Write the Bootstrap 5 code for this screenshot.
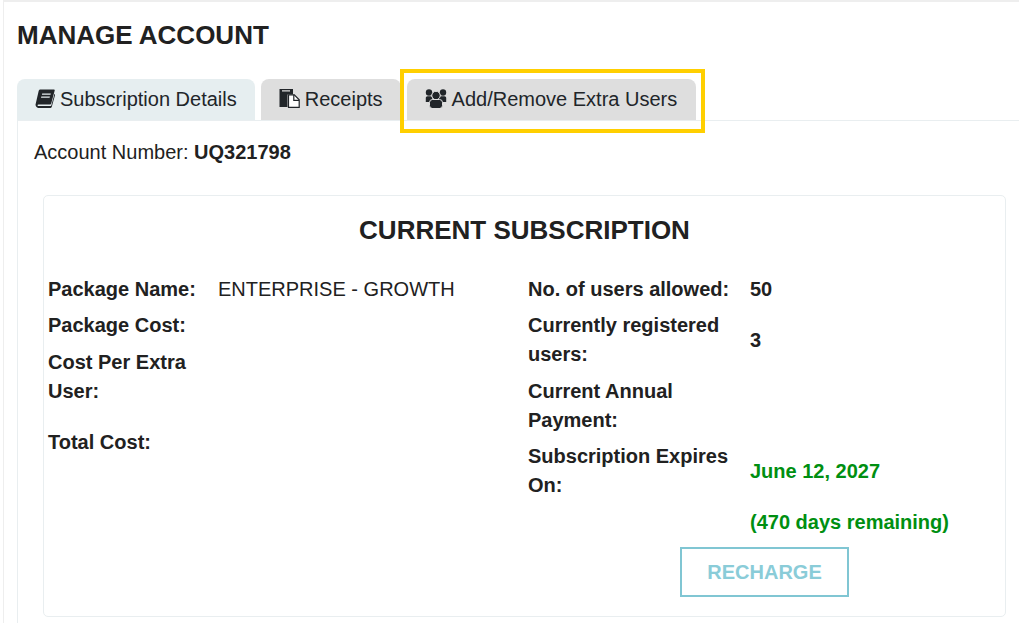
<!DOCTYPE html>
<html lang="en"><head><meta charset="utf-8"><title>Manage Account</title>
<link href="https://cdn.jsdelivr.net/npm/bootstrap@5.3.0/dist/css/bootstrap.min.css" rel="stylesheet">
<style>
html,body{height:623px;overflow:hidden}
body{font-family:"Liberation Sans",Arial,sans-serif;color:#212121;background:#fff;font-size:20px;line-height:29px}
.shell{border-top:2px solid #eee;border-left:1px solid #eee;margin-left:3px;height:623px;padding:16px 0 0 13px}
.pagehead{font-size:26px;font-weight:700;line-height:34px;margin:0 0 27px 0}
.tabrow{gap:6px;border-bottom:1px solid #e9eef0;height:42px}
.tabitem{height:41px;background:#dedede;border-radius:8px 8px 0 0;font-size:20px;padding:0 18px;color:#212529;display:flex;align-items:center;gap:5px;text-decoration:none}
.tabitem.current{background:#e6eef0}
.tabitem svg{flex:none;fill:#212529;margin-bottom:3px}
.tabframe{border:4px solid #ffcf00;padding:6px 5px 8px 3px;margin:-10px 0 -13px -7px;display:flex}
.tabframe .tabitem{padding-right:19px}
.tabpane{border-left:1px solid #e9eef0;padding:17px 0 0 16px;height:520px}
.subbox{margin:28px 13px 0 9px;border:1px solid #e9eef0;border-radius:5px;height:422px;padding:14px 4px 0 4px}
.subtitle{font-size:26px;font-weight:700;text-align:center;line-height:40px;margin:0 0 25px}
.cols{display:flex}
.leftcol{width:480px}
.rightcol{flex:1}
.inforow{display:flex;align-items:center;margin-bottom:7px}
.rowgap8{margin-bottom:8px}
.lbl{font-weight:700;flex:none}
.leftcol .lbl{width:170px}
.rightcol .lbl{width:222px}
.val{flex:1;min-width:0}
.strongval{font-weight:700}
.greenval{font-weight:700;color:#008f11}
.rowleft-extra{margin-bottom:22px}
.rechargebtn{display:block;width:169px;height:50px;margin:0 0 0 152px;border:2px solid #80c6d3;border-radius:0;background:#fff;color:#8accd8;font-weight:700;font-size:20px;padding:0}
.rechargebtn:hover{background:#fff;color:#8accd8;border-color:#80c6d3}
.remain{margin:8px 0 10px 222px}
</style></head><body>
<div class="shell">
<h1 class="pagehead">MANAGE ACCOUNT</h1>
<div class="d-flex tabrow">
<a class="tabitem current" href="#"><svg width="20" height="20" viewBox="0 0 20 20"><path d="M5.500 1.500H19c.6 0 .9.500.7 1.100l-3.400 12.600c-.2.800-.8 1.300-1.600 1.300H3.500c-.8 0-1.100.6-.9 1 .2.400.6.600 1.100.600h11.600c.5 0 .8-.2 1-.7l3.200-11.600.4.400c.2.300.2.700.1 1l-3.200 11.500c-.2.800-1 1.300-1.900 1.300H3.200C1.500 19.500.2 17.900.6 16.200L3.600 3.200C3.800 2.200 4.500 1.500 5.500 1.500zM7.200 5.500l-.3 1.200h8.600l.3-1.200zM6.300 8.500L6 9.700h8.600l.3-1.200z" fill-rule="evenodd"/></svg><span>Subscription Details</span></a>
<a class="tabitem" href="#"><svg width="21" height="20" viewBox="0 0 21 20"><path d="M.5 1h13.500v5.500H8.500v12.500H.5zM3 2.200h8v1.400H3z" fill-rule="evenodd"/><path d="M9.500 6.800h5.800L20.200 11.800V19.400H9.500z" fill="#fff" stroke="#212529" stroke-width="1.200"/><path d="M14.800 6.800v5.500H20" fill="none" stroke="#212529" stroke-width="1.200"/></svg><span>Receipts</span></a>
<div class="tabframe"><a class="tabitem" href="#"><svg width="22" height="20" viewBox="0 0 22 20"><circle cx="4" cy="4.500" r="3.200"/><circle cx="18" cy="4.500" r="3.200"/><path d="M.8 14V10c0-1 .7-1.700 1.700-1.700h3c1 0 1.700.7 1.700 1.700v4zM14 14V10c0-1 .7-1.700 1.700-1.700h3.800c1 0 1.700.7 1.700 1.700v4z"/><circle cx="11" cy="7.500" r="4.200" stroke="#dedede" stroke-width="1"/><rect x="4.500" y="11.500" width="13" height="9" rx="3" stroke="#dedede" stroke-width="1"/></svg><span>Add/Remove Extra Users</span></a></div>
</div>
<div class="tabpane">
<div>Account Number: <b>UQ321798</b></div>
<div class="subbox">
<h2 class="subtitle">CURRENT SUBSCRIPTION</h2>
<div class="cols">
<div class="leftcol">
<div class="inforow"><div class="lbl">Package Name:</div><div class="val">ENTERPRISE - GROWTH</div></div>
<div class="inforow rowgap8"><div class="lbl">Package Cost:</div><div class="val"></div></div>
<div class="inforow rowleft-extra"><div class="lbl">Cost Per Extra<br>User:</div><div class="val"></div></div>
<div class="inforow"><div class="lbl">Total Cost:</div><div class="val"></div></div>
</div>
<div class="rightcol">
<div class="inforow"><div class="lbl">No. of users allowed:</div><div class="val strongval">50</div></div>
<div class="inforow rowgap8"><div class="lbl">Currently registered<br>users:</div><div class="val strongval">3</div></div>
<div class="inforow"><div class="lbl">Current Annual<br>Payment:</div><div class="val"></div></div>
<div class="inforow mb-0"><div class="lbl">Subscription Expires<br>On:</div><div class="val greenval">June 12, 2027</div></div>
<div class="remain greenval">(470 days remaining)</div>
<button class="btn rechargebtn" type="button">RECHARGE</button>
</div>
</div>
</div>
</div>
</div>
<script src="https://cdn.jsdelivr.net/npm/bootstrap@5.3.0/dist/js/bootstrap.bundle.min.js"></script>
</body></html>
